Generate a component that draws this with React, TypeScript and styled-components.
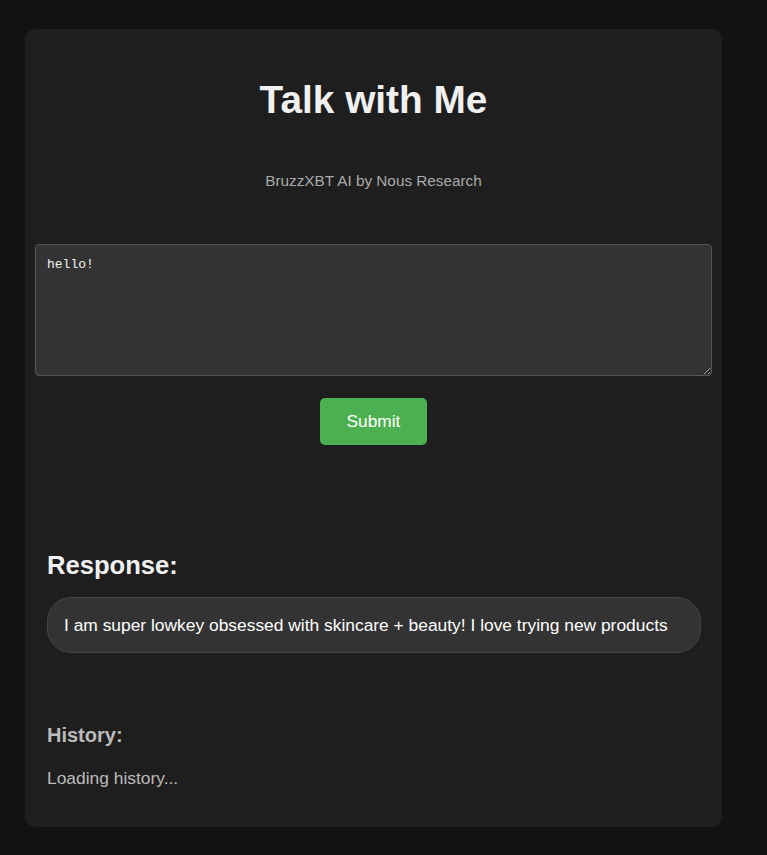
import React, { useState } from 'react';
import styled, { createGlobalStyle } from 'styled-components';

const GlobalStyle = createGlobalStyle`
    html, body {
        margin: 0;
        padding: 0;
        background-color: #121212;
        font-family: "Liberation Sans", Arial, sans-serif;
        color: #f0f0f0;
    }
    * {
        box-sizing: border-box;
    }
`

const Card = styled.div`
    width: 697px;
    margin: 29px 0 0 25px;
    padding: 49px 10px 38px;
    background-color: #1e1e1e;
    border-radius: 10px;
    display: flex;
    flex-direction: column;
`

const Title = styled.h1`
    margin: 0;
    font-size: 38.8px;
    font-weight: bold;
    text-align: center;
    color: #f0f0f0;
`

const Subtitle = styled.p`
    margin: 50px 0 0;
    font-size: 15.3px;
    text-align: center;
    color: #aaaaaa;
`

const Prompt = styled.textarea`
    display: block;
    width: 100%;
    height: 132px;
    margin-top: 54px;
    padding: 12px 11px 10px;
    background-color: #333333;
    color: #f0f0f0;
    border: 1px solid #555555;
    border-radius: 4px;
    font-family: "Liberation Mono", "Courier New", monospace;
    font-size: 13px;
    outline: none;
    resize: vertical;
`

const ButtonRow = styled.div`
    display: flex;
    justify-content: center;
    margin-top: 22px;
`

const SubmitButton = styled.button`
    width: 107px;
    height: 47px;
    border: none;
    border-radius: 5px;
    background-color: #4caf50;
    color: #ffffff;
    font-family: "Liberation Sans", Arial, sans-serif;
    font-size: 17.3px;
    cursor: pointer;
`

const Section = styled.div<{ $top: number }>`
    margin: ${p => p.$top}px 11px 0 12px;
    display: flex;
    flex-direction: column;
`

const SectionTitle = styled.h2<{ $size: number; $muted?: boolean }>`
    margin: 0;
    font-size: ${p => p.$size}px;
    font-weight: bold;
    color: ${p => (p.$muted ? '#bbbbbb' : '#f0f0f0')};
`

const ResponseBox = styled.div`
    margin-top: 17px;
    padding: 17px 16px;
    background-color: #333333;
    border: 1px solid #444444;
    border-radius: 24px;
    font-size: 17.4px;
    line-height: 20px;
    color: #ffffff;
`

const HistoryText = styled.p`
    margin: 21px 0 0;
    font-size: 17.4px;
    color: #bbbbbb;
`

export default function App() {
    const [prompt, setPrompt] = useState('hello!');

    return <>
        <GlobalStyle />
        <Card>
            <Title>Talk with Me</Title>
            <Subtitle>BruzzXBT AI by Nous Research</Subtitle>
            <Prompt value={prompt} onChange={(e) => setPrompt(e.target.value)} />
            <ButtonRow>
                <SubmitButton>Submit</SubmitButton>
            </ButtonRow>
            <Section $top={106}>
                <SectionTitle $size={25.6}>Response:</SectionTitle>
                <ResponseBox>I am super lowkey obsessed with skincare + beauty! I love trying new products</ResponseBox>
            </Section>
            <Section $top={71}>
                <SectionTitle $size={20} $muted>History:</SectionTitle>
                <HistoryText>Loading history...</HistoryText>
            </Section>
        </Card>
    </>
}
